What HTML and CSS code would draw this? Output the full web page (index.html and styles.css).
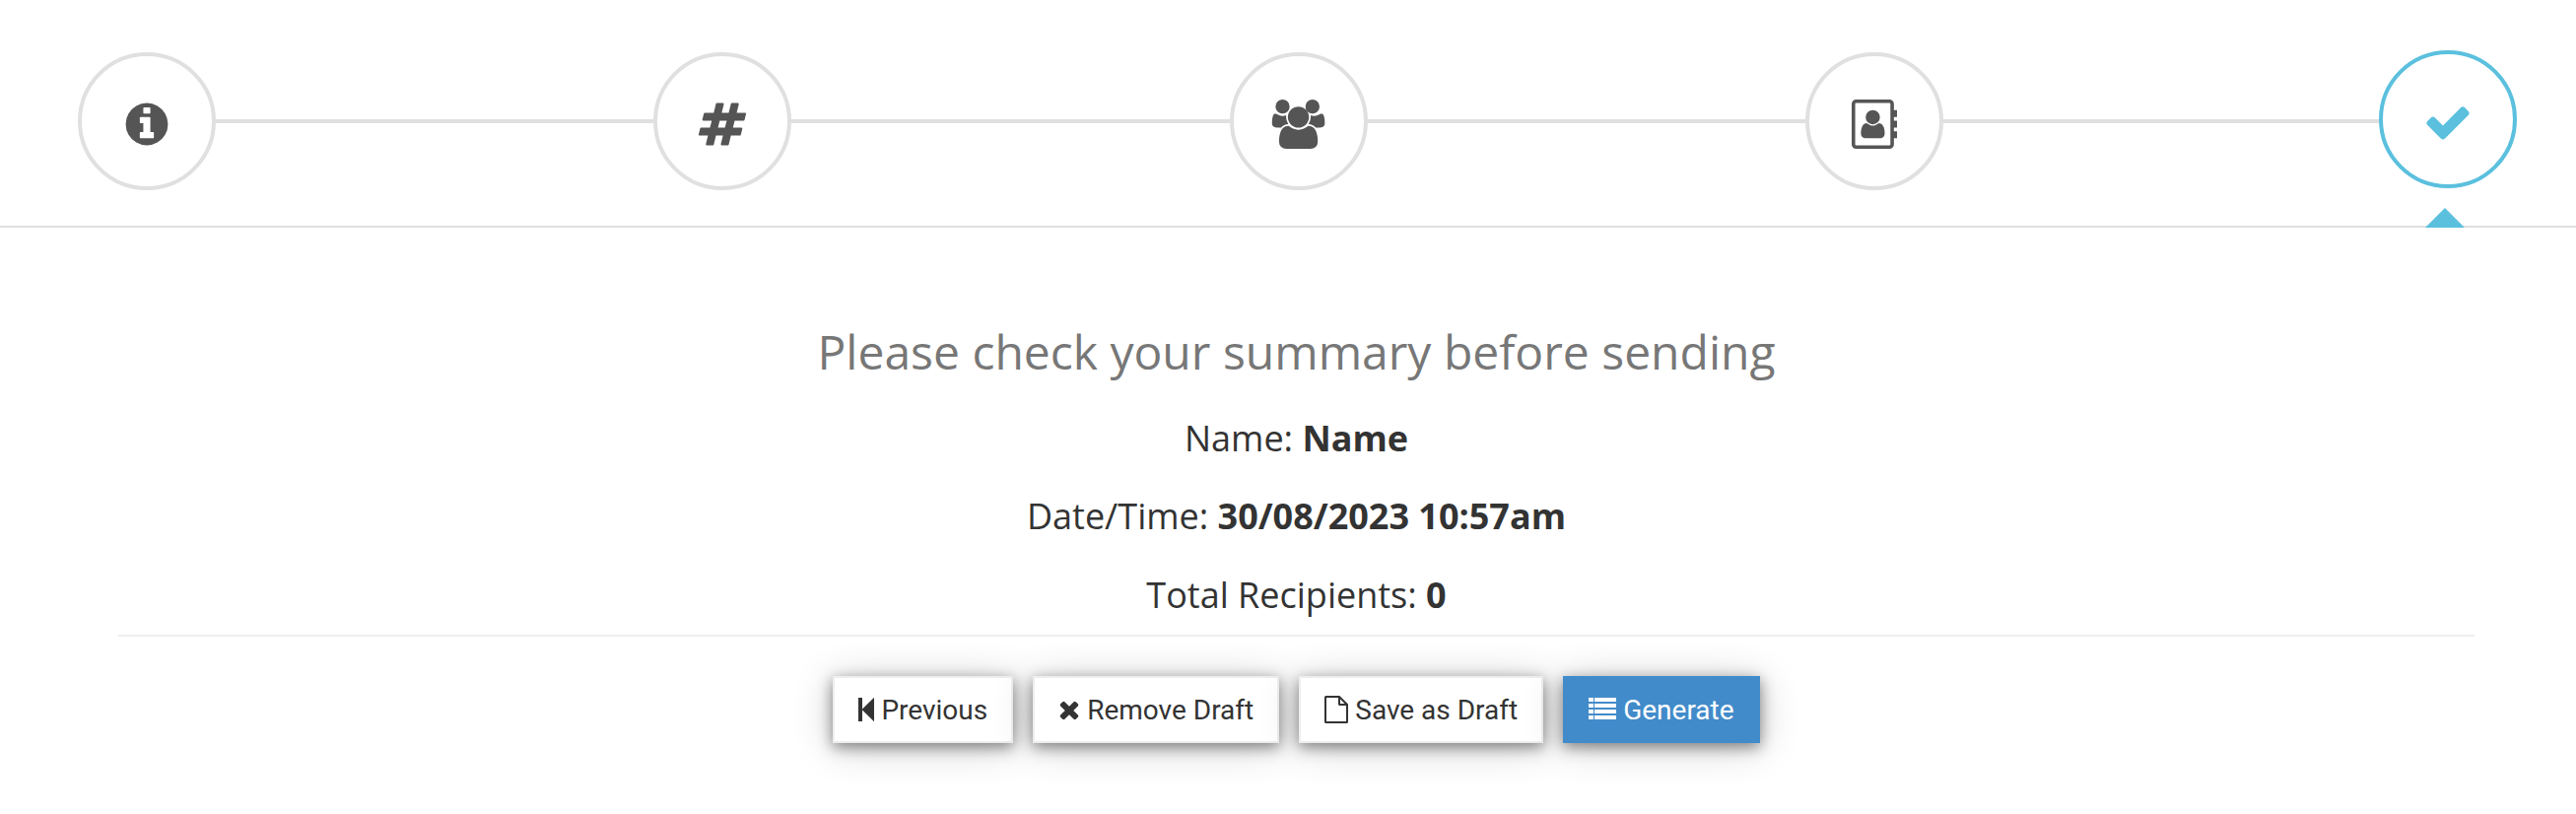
FILE: index.html
```html
<!DOCTYPE html>
<html lang="en">
<head>
  <meta charset="UTF-8" />
  <meta name="viewport" content="width=device-width, initial-scale=1.0"/>
  <title>Summary</title>
  <link rel="stylesheet" href="styles.css">
</head>
<body>

  <!-- Wizard steps -->
  <nav class="wizard">
    <a class="step">
      <svg class="step-icon" viewBox="0 0 1792 1792"><path d="M1152 1376v-160q0-14-9-23t-23-9h-96v-512q0-14-9-23t-23-9h-320q-14 0-23 9t-9 23v160q0 14 9 23t23 9h96v320h-96q-14 0-23 9t-9 23v160q0 14 9 23t23 9h448q14 0 23-9t9-23zm-128-896v-160q0-14-9-23t-23-9h-192q-14 0-23 9t-9 23v160q0 14 9 23t23 9h192q14 0 23-9t9-23zm640 416q0 209-103 385.5t-279.5 279.5-385.5 103-385.5-103-279.5-279.5-103-385.5 103-385.5 279.5-279.5 385.5-103 385.5 103 279.5 279.5 103 385.5z"/></svg>
    </a>
    <span class="connector"></span>
    <a class="step">
      <svg class="step-icon" viewBox="0 0 1792 1792"><path d="M991 1024l64-256h-254l-64 256h254zm768-504l-56 224q-7 24-31 24h-327l-64 256h311q15 0 25 12 10 14 6 28l-56 224q-5 24-31 24h-327l-81 328q-7 24-31 24h-224q-16 0-26-12-9-12-6-28l78-312h-254l-81 328q-7 24-31 24h-225q-15 0-25-12-9-12-6-28l78-312h-311q-15 0-25-12-9-12-6-28l56-224q7-24 31-24h327l64-256h-311q-15 0-25-12-10-14-6-28l56-224q5-24 31-24h327l81-328q7-24 32-24h224q15 0 25 12 9 12 6 28l-78 312h254l81-328q7-24 32-24h224q15 0 25 12 9 12 6 28l-78 312h311q15 0 25 12 9 12 6 28z"/></svg>
    </a>
    <span class="connector"></span>
    <a class="step">
      <svg class="step-icon" viewBox="0 0 2048 1792"><path d="M657 896q-162 5-265 128h-134q-82 0-138-40.5t-56-118.5q0-353 124-353 6 0 43.5 21t97.5 42.5 119 21.5q67 0 133-23-5 37-5 66 0 139 81 256zm1071 637q0 120-73 189.5t-194 69.5h-874q-121 0-194-69.5t-73-189.5q0-53 3.5-103.5t14-109 26.5-108.5 43-97.5 62-81 85.5-53.5 111.5-20q10 0 43 21.5t73 48 107 48 135 21.5 135-21.5 107-48 73-48 43-21.5q61 0 111.5 20t85.5 53.5 62 81 43 97.5 26.5 108.5 14 109 3.5 103.5zm-1024-1277q0 106-75 181t-181 75-181-75-75-181 75-181 181-75 181 75 75 181zm704 384q0 159-112.5 271.5t-271.5 112.5-271.5-112.5-112.5-271.5 112.5-271.5 271.5-112.5 271.5 112.5 112.5 271.5zm576 225q0 78-56 118.5t-138 40.5h-134q-103-123-265-128 81-117 81-256 0-29-5-66 66 23 133 23 59 0 119-21.5t97.5-42.5 43.5-21q124 0 124 353zm-192-609q0 106-75 181t-181 75-181-75-75-181 75-181 181-75 181 75 75 181z"/></svg>
    </a>
    <span class="connector"></span>
    <a class="step">
      <svg class="step-icon" viewBox="0 0 1664 1792"><path d="M1028 644q0 107-76.5 183t-183.5 76-183.5-76-76.5-183q0-108 76.5-184t183.5-76 183.5 76 76.5 184zm-48 220q46 0 82.5 17t60 47.5 39.5 67 24 81 11.5 82.5 3.5 79q0 67-39.5 118.5t-105.5 51.5h-576q-66 0-105.5-51.5t-39.5-118.5q0-48 4.5-93.5t18.5-98.5 36.5-91.5 63-64.5 93.5-26h5q7 4 32 19.5t35.5 21 33 17 37 16 35 9 39.5 4.5 39.5-4.5 35-9 37-16 33-17 35.5-21 32-19.5zm684-256q0 13-9.5 22.5t-22.5 9.5h-96v128h96q13 0 22.5 9.5t9.5 22.5v192q0 13-9.5 22.5t-22.5 9.5h-96v128h96q13 0 22.5 9.5t9.5 22.5v192q0 13-9.5 22.5t-22.5 9.5h-96v224q0 66-47 113t-113 47h-1216q-66 0-113-47t-47-113v-1472q0-66 47-113t113-47h1216q66 0 113 47t47 113v224h96q13 0 22.5 9.5t9.5 22.5v192zm-256 1024v-1472q0-13-9.5-22.5t-22.5-9.5h-1216q-13 0-22.5 9.5t-9.5 22.5v1472q0 13 9.5 22.5t22.5 9.5h1216q13 0 22.5-9.5t9.5-22.5z"/></svg>
    </a>
    <span class="connector"></span>
    <a class="step active">
      <svg class="step-icon" viewBox="0 0 1792 1792"><path d="M1671 566q0 40-28 68l-724 724-136 136q-28 28-68 28t-68-28l-136-136-362-362q-28-28-28-68t28-68l136-136q28-28 68-28t68 28l294 295 656-657q28-28 68-28t68 28l136 136q28 28 28 68z"/></svg>
    </a>
  </nav>

  <main class="summary">
    <h2>Please check your summary before sending</h2>
    <p>Name: <strong>Name</strong></p>
    <p>Date/Time: <strong>30/08/2023 10:57am</strong></p>
    <p>Total Recipients: <strong>0</strong></p>
    <hr>

    <div class="actions">
      <button class="btn">
        <svg width="16" height="28" viewBox="0 0 16 28"><path d="M0 2h4v24h-4zM3.500 14L15.500 2.300q.8-.6.8.3v22.800q0 .9-.8.3z"/></svg>
        Previous
      </button>
      <button class="btn">
        <svg width="22" height="28" viewBox="0 0 1408 1792"><path d="M1298 1322q0 40-28 68l-136 136q-28 28-68 28t-68-28l-294-294-294 294q-28 28-68 28t-68-28l-136-136q-28-28-28-68t28-68l294-294-294-294q-28-28-28-68t28-68l136-136q28-28 68-28t68 28l294 294 294-294q28-28 68-28t68 28l136 136q28 28 28 68t-28 68l-294 294 294 294q28 28 28 68z"/></svg>
        Remove Draft
      </button>
      <button class="btn">
        <svg width="24" height="28" viewBox="0 0 24 28"><path class="line" d="M15 1H1.500Q1 1 1 1.500V26.500Q1 27 1.500 27H22.500Q23 27 23 26.500V9zM15 1V8.500Q15 9 15.500 9H23"/></svg>
        Save as Draft
      </button>
      <button class="btn btn-primary">
        <svg width="28" height="28" viewBox="0 0 28 28"><path d="M0 2h5v4H0zM6 2h22.500v4H6zM0 8h5v4H0zM6 8h22.500v4H6zM0 14h5v4H0zM6 14h22.500v4H6zM0 20h5v4H0zM6 20h22.500v4H6z"/></svg>
        Generate
      </button>
    </div>
  </main>

</body>
</html>
```
FILE: styles.css
```css
* { box-sizing: border-box; }
body {
  font-family: 'Open Sans', sans-serif;
  margin: 0;
  min-height: 826px;
  background: #fff;
  color: #333;
}

/* Wizard */
.wizard {
  display: flex;
  align-items: center;
  height: 231px;
  padding: 17px 58px 0 79px;
  border-bottom: 2px solid #e0e0e0;
}

.step {
  display: flex;
  align-items: center;
  justify-content: center;
  width: 140px;
  height: 140px;
  padding-top: 6px;
  border: 4px solid #e0e0e0;
  border-radius: 50%;
  color: #555;
}

.step-icon {
  height: 50px;
  fill: currentColor;
}

.connector {
  flex: 1;
  height: 4px;
  background: #e0e0e0;
}

.step.active {
  position: relative;
  margin: -2px 2px 2px -2px;
  border-color: #5bc0de;
  color: #5bc0de;
}

.step.active::after {
  content: '';
  position: absolute;
  left: 43px;
  bottom: -44px;
  border: 20px solid transparent;
  border-top: 0;
  border-bottom-color: #5bc0de;
}

/* Summary */
.summary {
  padding: 93px 103px 0 120px;
  text-align: center;
}

.summary h2 {
  margin: 0;
  font-size: 48px;
  font-weight: 400;
  line-height: 66px;
  color: #777;
}

.summary p {
  margin: 0 0 28px;
  font-size: 36px;
  line-height: 51.5px;
}

.summary h2 + p {
  margin-top: 28.5px;
}

.summary hr {
  height: 2px;
  margin: -13px 0 40px;
  border: 0;
  background: #eee;
}

.actions {
  display: flex;
  justify-content: center;
  gap: 20px;
}

.btn {
  display: flex;
  align-items: center;
  gap: 7px;
  height: 68px;
  padding: 0 24px;
  border: 2px solid #eee;
  background: #fff;
  color: #333;
  font-family: Roboto, sans-serif;
  font-size: 28px;
  box-shadow: 0 4px 14px rgba(0,0,0,0.45), 0 4px 40px rgba(0,0,0,0.2);
}

.btn svg {
  fill: currentColor;
}

.btn .line {
  fill: none;
  stroke: currentColor;
  stroke-width: 2;
}

.btn-primary {
  border-color: #428bca;
  background: #428bca;
  color: #fff;
}
```
